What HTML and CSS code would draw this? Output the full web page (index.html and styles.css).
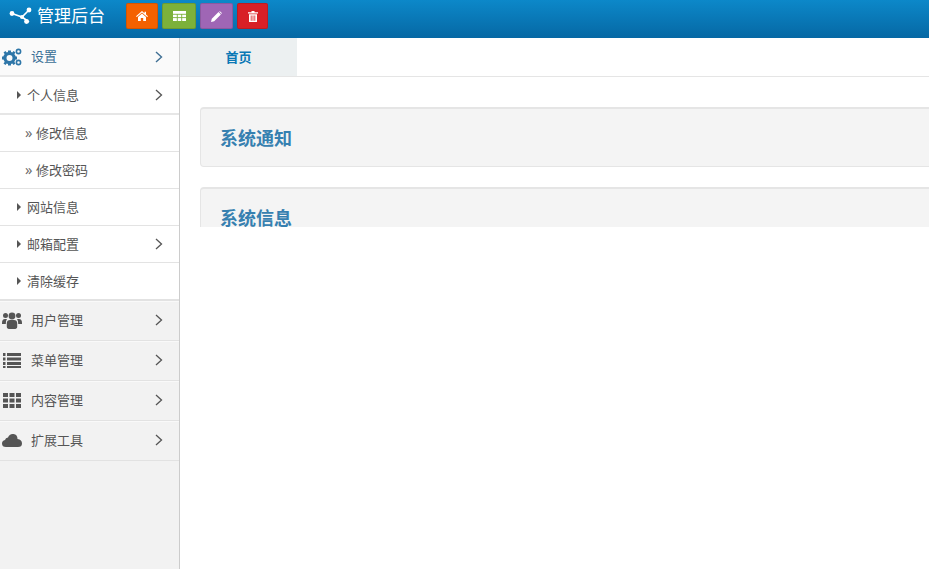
FILE: index.html
```html
<!DOCTYPE html>
<html lang="zh">
<head>
<meta charset="utf-8">
<title>管理后台</title>
<link rel="stylesheet" href="styles.css">
</head>
<body>
<header class="topbar">
  <div class="brand">
    <svg class="brand-icon" viewBox="0 0 24 18" width="24" height="18"><path d="M3 6.5 L13 10 L20 3 M13 10 L20 15" fill="none" stroke="#fff" stroke-width="1.6"/><circle cx="3" cy="6.5" r="2.4" fill="#fff"/><circle cx="13" cy="10" r="2" fill="#fff"/><circle cx="20" cy="3" r="2.4" fill="#fff"/><circle cx="17.5" cy="14.5" r="2.4" fill="#fff"/></svg>
    <span class="brand-text">管理后台</span>
  </div>
  <div class="shortcuts">
    <a class="shortcut orange"><svg viewBox="0 0 12 10" width="12" height="10"><path d="M6 0 L8.5 2.2 V0.8 H10 V3.5 L12 5.3 L11.2 6 L6 1.6 L0.8 6 L0 5.3 Z M2 6 L6 2.6 L10 6 V10 H7.2 V7 H4.8 V10 H2 Z" fill="#fff"/></svg></a>
    <a class="shortcut green"><svg viewBox="0 0 13 10" width="13" height="10"><path d="M0 0 H13 V10 H0 Z" fill="#fff"/><path d="M0 3.3 H13 M0 6.6 H13 M4.3 3 V10 M8.7 3 V10" stroke="#7cb13a" stroke-width="0.9"/></svg></a>
    <a class="shortcut purple"><svg viewBox="0 0 11 11" width="11" height="11"><path d="M0 11 L0.8 7.8 L7.5 1.1 L9.9 3.5 L3.2 10.2 Z M8.2 0.4 Q8.7 0 9.2 0.4 L10.6 1.8 Q11 2.3 10.6 2.8 L10.5 2.9 L8.1 0.5 Z" fill="#fff"/></svg></a>
    <a class="shortcut red"><svg viewBox="0 0 10 11" width="10" height="11"><path d="M3.5 1.2 V0 H6.5 V1.2 H10 V2.4 H0 V1.2 Z M1 3.2 H9 V11 H1 Z" fill="#fff"/><path d="M3.2 4.5 V9.8 M5 4.5 V9.8 M6.8 4.5 V9.8" stroke="#d81f26" stroke-width="0.8"/></svg></a>
  </div>
</header>
<div class="body">
  <aside class="sidebar">
    <div class="menu-head active">
      <svg class="menu-icon" viewBox="0 0 20 18" width="20" height="18" fill="#2e76a8"><circle cx="7.5" cy="10" r="4.6" fill="none" stroke="#2e76a8" stroke-width="3.2"/><path d="M6 2.5 H9 V5 H6 Z M6 15 H9 V17.5 H6 Z M0 8.5 H2.5 V11.5 H0 Z M12.5 8.5 H15 V11.5 H12.5 Z M1.5 4.5 L3.5 3 L5 5 L3 6.5 Z M10 15 L12 13.5 L13.5 15.5 L11.5 17 Z M1.5 15.5 L3 13.5 L5 15 L3.5 17 Z M10 5 L11.5 3 L13.5 4.5 L12 6.5 Z"/><circle cx="16.5" cy="3.5" r="2.1" fill="none" stroke="#2e76a8" stroke-width="1.6"/><circle cx="16.5" cy="14.5" r="2.1" fill="none" stroke="#2e76a8" stroke-width="1.6"/></svg>
      <span class="menu-label">设置</span>
      <svg class="chev" viewBox="0 0 8 12" width="8" height="12"><path d="M1 1 L6.5 6 L1 11" fill="none" stroke="#3f6f94" stroke-width="1.4"/></svg>
    </div>
    <div class="sub-item sub-open"><span class="tri"></span><span class="item-label">个人信息</span><svg class="chev" viewBox="0 0 8 12" width="8" height="12"><path d="M1 1 L6.5 6 L1 11" fill="none" stroke="#555" stroke-width="1.3"/></svg></div>
    <div class="leaf"><span class="raquo">»</span><span class="item-label">修改信息</span></div>
    <div class="leaf"><span class="raquo">»</span><span class="item-label">修改密码</span></div>
    <div class="sub-item"><span class="tri"></span><span class="item-label">网站信息</span></div>
    <div class="sub-item"><span class="tri"></span><span class="item-label">邮箱配置</span><svg class="chev" viewBox="0 0 8 12" width="8" height="12"><path d="M1 1 L6.5 6 L1 11" fill="none" stroke="#555" stroke-width="1.3"/></svg></div>
    <div class="sub-item sub-last"><span class="tri"></span><span class="item-label">清除缓存</span></div>
    <div class="menu-head">
      <svg class="menu-icon" viewBox="0 0 20 18" width="20" height="18" fill="#555"><circle cx="3.5" cy="4.5" r="2.5"/><circle cx="16.5" cy="4.5" r="2.5"/><circle cx="10" cy="5" r="3.4"/><path d="M0 12 Q0 8 3 8 H5 Q3.5 10 3.8 13 H0 Z M20 12 Q20 8 17 8 H15 Q16.5 10 16.2 13 H20 Z M4.8 16 V12 Q5 9 8 9 H12 Q15 9 15.2 12 V16 Q15 18 12 18 H8 Q5 18 4.8 16 Z"/></svg>
      <span class="menu-label">用户管理</span>
      <svg class="chev" viewBox="0 0 8 12" width="8" height="12"><path d="M1 1 L6.5 6 L1 11" fill="none" stroke="#555" stroke-width="1.3"/></svg>
    </div>
    <div class="menu-head">
      <svg class="menu-icon" viewBox="0 0 20 18" width="20" height="18" fill="#555"><path d="M1 2 H3.5 V5 H1 Z M5 2 H19 V5 H5 Z M1 6.5 H3.5 V9.5 H1 Z M5 6.5 H19 V9.5 H5 Z M1 11 H3.5 V14 H1 Z M5 11 H19 V14 H5 Z M1 15 H3.5 V17 H1 Z M5 15 H19 V17 H5 Z"/></svg>
      <span class="menu-label">菜单管理</span>
      <svg class="chev" viewBox="0 0 8 12" width="8" height="12"><path d="M1 1 L6.5 6 L1 11" fill="none" stroke="#555" stroke-width="1.3"/></svg>
    </div>
    <div class="menu-head">
      <svg class="menu-icon" viewBox="0 0 20 18" width="20" height="18" fill="#555"><path d="M1 2 H6 V6 H1 Z M7.5 2 H12.5 V6 H7.5 Z M14 2 H19 V6 H14 Z M1 7.5 H6 V11.5 H1 Z M7.5 7.5 H12.5 V11.5 H7.5 Z M14 7.5 H19 V11.5 H14 Z M1 13 H6 V17 H1 Z M7.5 13 H12.5 V17 H7.5 Z M14 13 H19 V17 H14 Z"/></svg>
      <span class="menu-label">内容管理</span>
      <svg class="chev" viewBox="0 0 8 12" width="8" height="12"><path d="M1 1 L6.5 6 L1 11" fill="none" stroke="#555" stroke-width="1.3"/></svg>
    </div>
    <div class="menu-head">
      <svg class="menu-icon" viewBox="0 0 20 18" width="20" height="18" fill="#555"><path d="M4 16 Q0 16 0 12.5 Q0 9.5 3 9 Q3.5 6.5 6 6.5 Q7.5 2.5 11.5 3 Q15.5 3.5 15.5 8 Q20 8.5 20 12.5 Q20 16 16 16 Z"/></svg>
      <span class="menu-label">扩展工具</span>
      <svg class="chev" viewBox="0 0 8 12" width="8" height="12"><path d="M1 1 L6.5 6 L1 11" fill="none" stroke="#555" stroke-width="1.3"/></svg>
    </div>
  </aside>
  <main class="main">
    <nav class="tabs"><a class="tab"><span class="tab-label">首页</span></a></nav>
    <div class="frame">
      <section class="panel"><h3>系统通知</h3></section>
      <section class="panel"><h3>系统信息</h3></section>
    </div>
  </main>
</div>
</body>
</html>
```
FILE: styles.css
```css
* { box-sizing: border-box; }
html, body { margin: 0; height: 100%; }
body {
  display: flex;
  flex-direction: column;
  height: 569px;
  overflow: hidden;
  background: #fff;
  color: #555;
  font-family: "Open Sans", "Noto Sans CJK SC", sans-serif;
  font-size: 13px;
}
.topbar {
  flex: 0 0 38px;
  display: flex;
  align-items: flex-start;
  background: linear-gradient(to bottom, #0c88c9, #0668a4);
}
.brand {
  display: flex;
  align-items: center;
  width: 126px;
  height: 29px;
  padding-left: 9px;
  color: #fff;
}
.brand-icon { margin-right: 4px; margin-top: 3px; flex: none; }
.brand-text {
  font-family: "Noto Sans CJK SC", sans-serif;
  font-size: 17px;
  line-height: 29px;
}
.shortcuts { display: flex; gap: 4px; margin-top: 3px; }
.shortcut {
  display: flex;
  align-items: center;
  justify-content: center;
  width: 33px;
  height: 26px;
  border-radius: 2px;
  border: 1px solid rgba(0, 0, 0, 0.12);
}
.shortcut.orange { width: 32px; background: #f46100; }
.shortcut.green { width: 34px; background: #7cb13a; }
.shortcut.purple { background: #9f66b5; }
.shortcut.red { width: 31px; background: #d81f26; }
.body { flex: 1; display: flex; min-height: 0; }
.sidebar {
  flex: 0 0 180px;
  background: #f2f2f2;
  border-right: 1px solid #ccc;
}
.menu-head {
  display: flex;
  align-items: center;
  height: 40px;
  padding: 0 0 2px 2px;
  border-bottom: 1px solid #e2e2e2;
  border-top: 1px solid #f9f9f9;
  color: #555;
}
.menu-head.active {
  height: 39px;
  padding-bottom: 0;
  background: #fafafa;
  color: #3a6f96;
  border-top: 0;
  border-bottom: 2px solid #e8e8e8;
}
.menu-icon { flex: none; margin-right: 9px; }
.menu-label { flex: 1; margin-bottom: 2px; }
.chev { flex: none; margin-right: 16px; }
.sub-item {
  display: flex;
  align-items: center;
  height: 37px;
  padding-left: 17px;
  background: #fff;
  border-bottom: 1px solid #e3e3e3;
}
.item-label { flex: 1; margin-bottom: 2px; }
.sub-open { height: 38px; border-bottom: 2px solid #e6e6e6; }
.sub-last { height: 38px; border-bottom: 2px solid #e2e2e2; }
.tri {
  flex: none;
  width: 0;
  height: 0;
  margin-right: 6px;
  border-left: 4px solid #555;
  border-top: 4px solid transparent;
  border-bottom: 4px solid transparent;
}
.leaf {
  display: flex;
  align-items: center;
  height: 37px;
  padding-left: 25px;
  background: #fff;
  border-bottom: 1px solid #e3e3e3;
}
.raquo {
  width: 11px;
  flex: none;
  font-size: 15px;
  line-height: 1;
  margin-bottom: 2px;
  color: #666;
}
.main { flex: 1; min-width: 0; display: flex; flex-direction: column; }
.tabs {
  flex: 0 0 39px;
  display: flex;
  border-bottom: 1px solid #e5e5e5;
}
.tab {
  display: flex;
  align-items: center;
  justify-content: center;
  width: 117px;
  height: 38px;
  background: #ecf0f1;
  color: #0a78b5;
  font-weight: 700;
}
.tab-label { margin-bottom: 2px; }
.frame {
  height: 150px;
  overflow: hidden;
  padding-left: 20px;
  padding-top: 30px;
}
.panel {
  height: 60px;
  margin-bottom: 20px;
  margin-right: -4px;
  padding: 17px 19px;
  background: #f4f4f4;
  border: 1px solid #e5e5e5;
  border-top-width: 2px;
  border-radius: 4px;
}
.panel h3 {
  margin: 0;
  color: #3680b0;
  font-size: 18px;
  font-weight: 700;
  line-height: 24px;
  font-family: "Open Sans", "Noto Sans CJK SC", sans-serif;
}
```
